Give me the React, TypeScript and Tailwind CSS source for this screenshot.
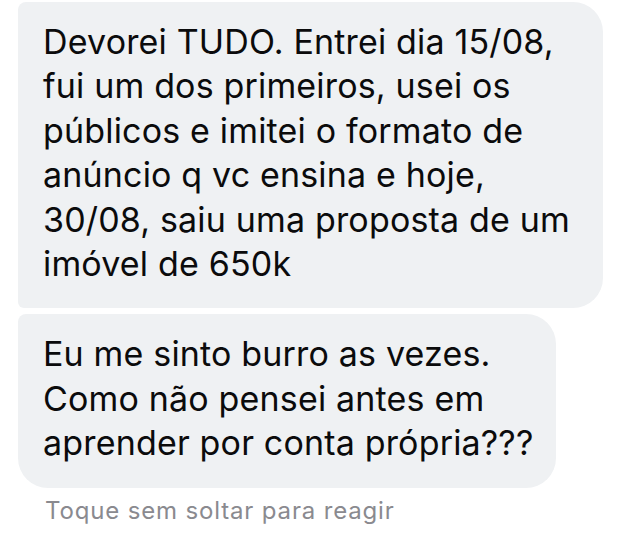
import React from 'react';

const first = [
  'Devorei TUDO. Entrei dia 15/08,',
  'fui um dos primeiros, usei os',
  'públicos e imitei o formato de',
  'anúncio q vc ensina e hoje,',
  '30/08, saiu uma proposta de um',
  'imóvel de 650k',
];

const second = [
  'Eu me sinto burro as vezes.',
  'Como não pensei antes em',
  'aprender por conta própria???',
];

const Bubble = ({ lines, className }: { lines: string[]; className: string }) => (
  <div className={`bg-[#eff1f3] pl-[25px] pt-[18px] pb-[22px] text-[#0b0b0c] text-[34px] tracking-[0.005em] leading-[44.4px] ${className}`}>
    {lines.map((l) => (
      <div key={l} className="whitespace-nowrap">{l}</div>
    ))}
  </div>
);

const App = () => {
  return (
    <div className="w-[640px] h-[540px] bg-white overflow-hidden font-['Inter',sans-serif]">
      <div className="pt-[2px] pl-[18px] flex flex-col gap-[6px]">
        <Bubble
          lines={first}
          className="w-[585px] rounded-tl-[8px] rounded-bl-[6px] rounded-tr-[30px] rounded-br-[30px]"
        />
        <Bubble
          lines={second}
          className="w-[538px] rounded-tl-[8px] rounded-bl-[30px] rounded-tr-[30px] rounded-br-[30px]"
        />
      </div>
      <div className="pl-[45px] pt-[5px] text-[24px] tracking-[0.035em] text-[#8a8a8f]">Toque sem soltar para reagir</div>
    </div>
  );
};

export default App;
